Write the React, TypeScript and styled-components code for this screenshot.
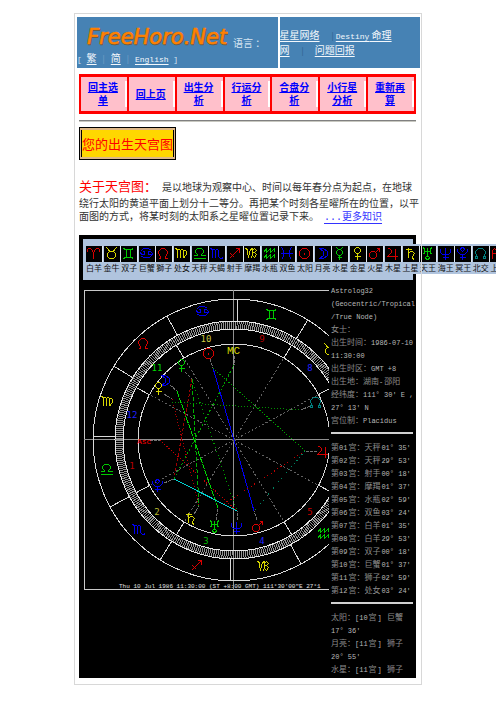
import React from "react";
import styled, { createGlobalStyle } from "styled-components";

const GlobalStyle = createGlobalStyle`
  * { box-sizing: border-box; }
  body {
    margin: 0;
    background: #fff;
    overflow-x: hidden;
    font-family: "Liberation Mono", "Noto Sans CJK SC", monospace;
  }
`;

const RED = "#d80000";
const YELLOW = "#d8d800";
const GREEN = "#00c800";
const BLUE = "#0000f0";
const TEAL = "#008080";

const Frame = styled.main`
  position: relative;
  margin: 13px 74px 0;
  padding: 3px 0 6px;
  border: 1px solid #d8d8d8;

  &::after {
    content: "";
    position: absolute;
    inset: 0 -1px 0 auto;
    border-right: 1px solid #d8d8d8;
    pointer-events: none;
  }
`;

const Header = styled.header`
  display: grid;
  grid-template-columns: 10fr 7fr;
  gap: 2px;
  margin: 0 1px 0 2px;
`;

const HeaderCell = styled.div`
  display: flex;
  flex-direction: column;
  justify-content: center;
  height: 51px;
  background: #4682b4;
  color: #d4e4f2;
  font-family: "Noto Sans CJK SC", sans-serif;
  font-size: 10px;
  line-height: 13px;
  white-space: pre;
`;

const LogoRow = styled.div`
  display: flex;
  align-items: flex-end;
  padding-left: 8px;
  height: 34px;
`;

const LogoSvg = styled.svg`
  flex: none;
  margin-right: 5px;
`;

const LanguageLabel = styled.span`
  padding-bottom: 2px;
`;

const HeaderLatin = styled.span`
  font-family: "Liberation Mono", monospace;
  font-size: 8px;
`;

const HeaderLink = styled.a`
  color: #f4f8fc;
  text-decoration: underline;
  text-underline-offset: 2px;
`;

const Divider = styled.span`
  padding: 0 6px;
  color: #7ea6ca;
  font-size: 8px;
`;

const DarkDivider = styled(Divider)`
  padding: 0 2px 0 12px;
  color: #2c5c88;
`;

const LanguageRow = styled.div`
  height: 17px;
`;

const Content = styled.div`
  margin: 6px 5px 0 4px;
`;

const Menu = styled.nav`
  display: grid;
  grid-template-columns: repeat(7, 1fr);
  gap: 2px;
  padding: 3px 2px;
  background: #f00;
`;

const MenuCell = styled.div`
  display: flex;
  align-items: center;
  height: 34px;
  background: #ffc0cb;
`;

const MenuSlot = styled.div`
  display: flex;
  flex: 1;
  align-items: center;
  justify-content: center;
  height: 26px;
  padding-top: 2px;
  border-right: 2px solid #fff;
  text-align: center;
`;

const MenuLink = styled.a`
  width: 32px;
  color: #00f;
  font-size: 10px;
  font-weight: 700;
  line-height: 13px;
`;

const Rule = styled.hr`
  height: 2px;
  margin: 6px 0 5px;
  border: 0;
  border-top: 1px solid #808080;
  border-bottom: 1px solid #c8c8c0;
`;

const TitleBox = styled.div`
  width: max-content;
  padding: 2px 1px;
  border: 1px solid #000;
  background: #deb887;
`;

const Title = styled.h1`
  margin: 0;
  border: solid #000;
  border-width: 0 1px;
  background: #ffd700;
  color: #f00;
  font-family: "Noto Sans CJK SC", sans-serif;
  font-size: 13px;
  font-weight: 400;
  line-height: 27px;
`;

const Intro = styled.p`
  margin: 14px 0 11px;
  color: #333;
  font-size: 10px;
  line-height: 13px;
  white-space: nowrap;
`;

const IntroFirst = styled.span`
  display: block;
  height: 24px;
  line-height: 24px;
`;

const IntroLine = styled.span`
  display: block;
  height: 13px;
`;

const IntroLead = styled.span`
  margin-right: 5px;
  color: #f00;
  font-family: "Noto Sans CJK SC", sans-serif;
  font-size: 13px;
`;

const MoreLink = styled.a`
  margin-left: 5px;
  color: #33f;
  text-underline-offset: 3px;
`;

const ChartBlock = styled.section`
  padding: 4px 3px 3px 4px;
  background: #000;
`;

const LegendBox = styled.div`
  height: 41px;
  padding: 5px 0 0 3px;
  background: #b0c4de;
`;

const LegendStrip = styled.div`
  display: grid;
  grid-template-columns: repeat(24, 1fr);
  width: 422px;
  height: 30px;
  padding-top: 2px;
  background: #b0c4de;
`;

const LegendItem = styled.div`
  display: flex;
  flex-direction: column;
  align-items: flex-start;
  color: #111;
  font-family: "Noto Sans CJK SC", sans-serif;
  font-size: 8px;
  line-height: 12px;
  white-space: nowrap;
`;

const LegendIcon = styled.svg`
  display: block;
  background: #000;
  box-shadow: 1px 0 #dde6f0;
`;

const ChartRow = styled.div`
  display: flex;
  gap: 2px;
  padding: 3px 0 0 1px;
`;

const ChartSvg = styled.svg`
  flex: none;
  margin-top: 7px;
  font-family: "Liberation Mono", monospace;
`;

const Info = styled.div`
  flex: 1;
  min-width: 0;
  color: #8c8c8c;
  font-family: "Noto Sans CJK SC", sans-serif;
  font-size: 8px;
  line-height: 13px;
  white-space: nowrap;
`;

const InfoLine = styled.div`
  height: 13px;
`;

const InfoLatin = styled.span`
  margin: 0 1px;
  color: #b8b8b8;
  font-family: "Liberation Mono", monospace;
  font-size: 7px;
  white-space: pre;

  &:first-child {
    margin-left: 0;
  }
`;

const InfoRule = styled.hr`
  height: 2px;
  margin: 6px 0;
  border: 0;
  background: #d0d0d0;
`;

const glyphs: Record<string, string> = {
  aries: "M3 7L2 6V4L3 3H5L7 5L8 8V13M8 8L9 5L11 3H13L14 4V6L13 7",
  taurus: "M3 2L5 4L6 6H10L11 4L13 2M6 6L4 8V11L6 13H10L12 11V8L10 6",
  gemini: "M3 3L5 4H11L13 3M3 13L5 12H11L13 13M6 4V12M10 4V12",
  cancer: "M2 6L5 3H10L13 5M14 9L11 12H6L3 11M4 6H6V9H4L2 8V6M10 6H12L14 8V9H10Z",
  leo: "M3 13H5V11L3 8V6L6 3H9L12 6V8L10 11V13H12",
  virgo: "M2 3L4 4V12M4 4H6L7 5V12M7 4H9L10 5V11L12 13M10 5H12L13 6V9L9 13",
  libra: "M2 13H14M2 10H6V9L4 7V5L6 3H10L12 5V7L10 9V10H14",
  scorpio: "M2 3L4 4V12M4 4H6L7 5V12M7 4H9L10 5V11L12 13H14V11",
  sagittarius: "M3 13L13 3M9 3H13V7M4 8L8 12",
  capricorn: "M2 3L4 4V8L5 11L7 4L9 3V10L7 13M9 5L11 3L13 5L11 7H9M11 7L13 9L11 12L9 10",
  aquarius: "M2 7L5 3V7L9 3V7L13 3V6M2 13L5 9V13L9 9V13L13 9V12",
  pisces: "M3 2L5 5V11L3 14M13 2L11 5V11L13 14M2 8H14",
  sun: "M6 3H10L13 6V10L10 13H6L3 10V6ZM8 7V9",
  moon: "M5 3H9L13 6V10L9 13H5L9 10V6Z",
  mercury: "M5 2L7 4H9L11 2M7 4L5 6V8L7 10H9L11 8V6L9 4M8 10V14M6 12H10",
  venus: "M7 2L5 4V6L7 8H9L11 6V4L9 2ZM8 8V14M5 11H11",
  mars: "M5 6L3 8V11L5 13H8L10 11V8L8 6ZM9 7L13 3M10 3H13V6",
  jupiter: "M3 3H5L7 5V7L3 11H13M11 3V14",
  saturn: "M3 4H9M6 2V12M6 8L8 6H10L12 8L10 11V13L12 14",
  uranus: "M4 2L5 4V7L4 9M12 2L11 4V7L12 9M5 6H11M8 2V11M7 11L6 12L7 14H9L10 12L9 11Z",
  neptune: "M3 3V7L5 9H11L13 7V3M8 2V14M5 12H11",
  pluto: "M7 2L6 4L8 6L10 4L9 2ZM3 3V6L6 9H10L13 6V3M8 9V14M5 12H11",
  node: "M3 13H5V11L3 8V6L6 3H10L13 6V8L11 11V13H13M5 11H3V13M11 11H13V13",
  asc: "M3 13V5L5 3L7 5V13M3 8H7M13 6H10V9H13V13H9",
};

const legend: [string, string, string][] = [
  ["aries", "白羊", RED],
  ["taurus", "金牛", YELLOW],
  ["gemini", "双子", GREEN],
  ["cancer", "巨蟹", BLUE],
  ["leo", "獅子", RED],
  ["virgo", "处女", YELLOW],
  ["libra", "天秤", GREEN],
  ["scorpio", "天蝎", BLUE],
  ["sagittarius", "射手", RED],
  ["capricorn", "摩羯", YELLOW],
  ["aquarius", "水瓶", GREEN],
  ["pisces", "双鱼", BLUE],
  ["sun", "太阳", RED],
  ["moon", "月亮", BLUE],
  ["mercury", "水星", GREEN],
  ["venus", "金星", YELLOW],
  ["mars", "火星", RED],
  ["jupiter", "木星", RED],
  ["saturn", "土星", YELLOW],
  ["uranus", "天王", GREEN],
  ["neptune", "海王", BLUE],
  ["pluto", "冥王", BLUE],
  ["node", "北交", TEAL],
  ["asc", "上升", RED],
];

const CX = 150;
const CY = 150;

const placed: [string, number, number, string][] = [
  ["leo", 60, 54, RED],
  ["cancer", 119, 22, BLUE],
  ["gemini", 188, 25, GREEN],
  ["taurus", 246, 60, YELLOW],
  ["virgo", 24, 112, YELLOW],
  ["libra", 23, 180, GREEN],
  ["scorpio", 55, 240, BLUE],
  ["sagittarius", 113, 276, RED],
  ["capricorn", 180, 277, YELLOW],
  ["aquarius", 240, 244, GREEN],
  ["sun", 125, 64, RED],
  ["venus", 98, 76, GREEN],
  ["moon", 81, 91, BLUE],
  ["venus", 75, 99, YELLOW],
  ["pluto", 74, 196, BLUE],
  ["saturn", 107, 229, YELLOW],
  ["uranus", 131, 237, GREEN],
  ["neptune", 153, 238, BLUE],
  ["mars", 174, 237, RED],
  ["jupiter", 239, 162, RED],
  ["node", 232, 113, TEAL],
];

const houseNumbers: [string, number, number, string][] = [
  ["12", 48, 125, "#2020ff"],
  ["11", 73, 78, "#00d800"],
  ["10", 122, 49, "#c8c840"],
  ["9", 178, 49, "#b80000"],
  ["8", 226, 78, "#2020ff"],
  ["1", 48, 176, "#b80000"],
  ["2", 73, 222, "#b8b830"],
  ["3", 122, 251, "#00b800"],
  ["4", 178, 251, "#2020ff"],
  ["5", 226, 222, "#c80000"],
];

const aspects: [number, number, number, number, string, string][] = [
  [129, 78, 150, 150, BLUE, "none"],
  [150, 150, 170, 221, BLUE, "none"],
  [93, 101, 134, 218, "#00d800", "6 1"],
  [108, 89, 115, 216, "#00b000", "4 2"],
  [108, 89, 90, 189, "#a00000", "3 2"],
  [88, 109, 115, 216, "#b00000", "1 2"],
  [76, 150, 153, 221, "#c00000", "1 2"],
  [90, 189, 153, 221, "#00d0d0", "none"],
  [90, 189, 150, 75, "#00a000", "2 2"],
  [221, 161, 134, 218, "#c00000", "1 3"],
  [221, 161, 170, 221, "#008060", "1 3"],
  [129, 78, 221, 161, "#00a000", "1 2"],
  [88, 112, 217, 120, "#009000", "1 2"],
  [108, 89, 153, 221, "#00a000", "1 3"],
];

const pointers: [number, number, number, number][] = [
  [126, 69, 129, 78],
  [101, 82, 108, 89],
  [86, 95, 93, 101],
  [80, 104, 88, 109],
  [150, 66, 150, 75],
  [66, 150, 76, 150],
  [80, 193, 90, 189],
  [110, 224, 115, 216],
  [132, 230, 134, 218],
  [153, 230, 153, 221],
  [173, 230, 170, 221],
  [233, 162, 221, 161],
  [226, 116, 217, 120],
];

const cusps = [28.3, 58.7, 121.4, 151.8, 208.3, 238.7, 301.4, 331.8];
const signs = Array.from({ length: 12 }, (_, i) => i * 30 - 1.6);

function radial(deg: number, inner: number, outer: number) {
  const a = (deg * Math.PI) / 180;
  return {
    x1: CX + Math.cos(a) * inner,
    y1: CY - Math.sin(a) * inner,
    x2: CX + Math.cos(a) * outer,
    y2: CY - Math.sin(a) * outer,
  };
}

function NatalChart() {
  return (
    <ChartSvg width="245" height="300" viewBox="0 0 245 300" role="img" aria-label="天宫图" fill="none">
      <g shapeRendering="crispEdges">
        <path d="M245 .5H.5V299.5H245" stroke="#c8c8c8" />
        <path d="M149.5 0V300M0 149.5H245" stroke="#909090" />
        <circle cx={CX} cy={CY} r="115" stroke="#909090" strokeWidth="8" strokeDasharray="1 1" />
        <circle cx={CX} cy={CY} r="141" stroke="#d8d8d8" />
        <circle cx={CX} cy={CY} r="119" stroke="#e8e8e8" />
        <circle cx={CX} cy={CY} r="111" stroke="#e8e8e8" />
        <circle cx={CX} cy={CY} r="96" stroke="#d8d8d8" />
        {signs.map((d) => (
          <line key={d} {...radial(d, 119, 141)} stroke="#d8d8d8" />
        ))}
        {cusps.map((d) => (
          <g key={d}>
            <line {...radial(d, 96, 111)} stroke="#d8d8d8" />
            <line {...radial(d, 0, 96)} stroke="#606060" strokeDasharray="2 2" />
          </g>
        ))}
        {pointers.map(([x1, y1, x2, y2]) => (
          <line key={`${x1}-${y1}`} x1={x1} y1={y1} x2={x2} y2={y2} stroke="#707070" strokeDasharray="3 1" />
        ))}
        {aspects.map(([x1, y1, x2, y2, stroke, dash], i) => (
          <line key={i} x1={x1} y1={y1} x2={x2} y2={y2} stroke={stroke} strokeDasharray={dash} />
        ))}
        {placed.map(([name, x, y, color]) => (
          <path key={`${name}-${x}`} d={glyphs[name]} transform={`translate(${x - 8.5} ${y - 8.5})`} stroke={color} />
        ))}
      </g>
      <g fontSize="9" textAnchor="middle" fontFamily="DejaVu Sans Mono, monospace">
        {houseNumbers.map(([n, x, y, color]) => (
          <text key={n} x={x} y={y + 3} fill={color}>{n}</text>
        ))}
      </g>
      <text x="143" y="64" fontSize="11" fill="#d8d800">MC</text>
      <text x="53" y="154" fontSize="8" fill="#ff0000">Asc</text>
      <text x="35" y="298" fontSize="6" fill="#e0e0e0">
        {"Thu 10 Jul 1986 11:30:00 (ST +8:00 GMT) 111°30'00\"E 27°1"}
      </text>
    </ChartSvg>
  );
}

const birthInfo = [
  "Astrolog32",
  "(Geocentric/Tropical",
  "/True Node)",
  "女士：",
  "出生时间：1986-07-10",
  "11:30:00",
  "出生时区：GMT +8",
  "出生地：湖南-邵阳",
  "经纬度：111° 30' E ,",
  "27° 13' N",
  "宫位制：Placidus",
];

const houseInfo = [
  "第01宫：天秤01° 35'",
  "第02宫：天秤29° 53'",
  "第03宫：射手00° 18'",
  "第04宫：摩羯01° 37'",
  "第05宫：水瓶02° 59'",
  "第06宫：双鱼03° 24'",
  "第07宫：白羊01° 35'",
  "第08宫：白羊29° 53'",
  "第09宫：双子00° 18'",
  "第10宫：巨蟹01° 37'",
  "第11宫：狮子02° 59'",
  "第12宫：处女03° 24'",
];

const planetInfo = [
  "太阳：[10宫] 巨蟹",
  "17° 36'",
  "月亮：[11宫] 狮子",
  "20° 55'",
  "水星：[11宫] 狮子",
];

function InfoLines({ lines }: { lines: string[] }) {
  return (
    <>
      {lines.map((line) => (
        <InfoLine key={line}>
          {line.split(/([\x20-\x7e°]+)/).map((part, i) =>
            i % 2 ? <InfoLatin key={i}>{part}</InfoLatin> : part
          )}
        </InfoLine>
      ))}
    </>
  );
}

const menu = ["回主选单", "回上页", "出生分析", "行运分析", "合盘分析", "小行星分析", "重新再算"];

export default function App() {
  return (
    <>
      <GlobalStyle />
      <Frame>
        <Header>
          <HeaderCell>
            <LogoRow>
              <LogoSvg width="143" height="30" viewBox="0 0 143 30" role="img" aria-label="FreeHoro.Net">
                <g fontFamily="DejaVu Sans, sans-serif" fontSize="21" fontStyle="italic" strokeWidth="0.6">
                  <text x="3" y="24" fill="#6b5a3c" stroke="#6b5a3c">FreeHoro.Net</text>
                  <text x="2" y="23" fill="#ff8000" stroke="#ff8000">FreeHoro.Net</text>
                </g>
              </LogoSvg>
              <LanguageLabel>语言 ：</LanguageLabel>
            </LogoRow>
            <LanguageRow>
              <HeaderLatin>[ </HeaderLatin>
              <HeaderLink href="#traditional">繁</HeaderLink>
              <Divider>|</Divider>
              <HeaderLink href="#simplified">简</HeaderLink>
              <Divider>|</Divider>
              <HeaderLink href="#english"><HeaderLatin>English</HeaderLatin></HeaderLink>
              <HeaderLatin> ]</HeaderLatin>
            </LanguageRow>
          </HeaderCell>
          <HeaderCell>
            <div>
              <HeaderLink href="#network">星星网络</HeaderLink>
              <DarkDivider>|</DarkDivider>
              <HeaderLink href="#destiny"><HeaderLatin>Destiny</HeaderLatin> 命理</HeaderLink>
            </div>
            <div>
              <HeaderLink href="#destiny">网</HeaderLink>
              <DarkDivider>|</DarkDivider>
              {"    "}
              <HeaderLink href="#report">问题回报</HeaderLink>
            </div>
          </HeaderCell>
        </Header>
        <Content>
          <Menu>
            {menu.map((label) => (
              <MenuCell key={label}>
                <MenuSlot>
                  <MenuLink href="#menu">{label}</MenuLink>
                </MenuSlot>
              </MenuCell>
            ))}
          </Menu>
          <Rule />
          <TitleBox>
            <Title>您的出生天宫图</Title>
          </TitleBox>
          <Intro>
            <IntroFirst>
              <IntroLead>关于天宫图：</IntroLead>
              是以地球为观察中心、时间以每年春分点为起点，在地球
            </IntroFirst>
            <IntroLine>绕行太阳的黄道平面上划分十二等分。再把某个时刻各星曜所在的位置，以平</IntroLine>
            <IntroLine>
              面图的方式，将某时刻的太阳系之星曜位置记录下来。
              <MoreLink href="#more">...更多知识</MoreLink>
            </IntroLine>
          </Intro>
          <ChartBlock>
            <LegendBox>
              <LegendStrip>
                {legend.map(([name, label, color]) => (
                  <LegendItem key={name}>
                    <LegendIcon width="16" height="16" viewBox="0 0 16 16" fill="none" shapeRendering="crispEdges" aria-hidden="true">
                      <path d={glyphs[name]} transform="translate(-.5 -.5)" stroke={color} />
                    </LegendIcon>
                    {label}
                  </LegendItem>
                ))}
              </LegendStrip>
            </LegendBox>
            <ChartRow>
              <NatalChart />
              <Info>
                <InfoLines lines={birthInfo} />
                <InfoRule />
                <InfoLines lines={houseInfo} />
                <InfoRule />
                <InfoLines lines={planetInfo} />
              </Info>
            </ChartRow>
          </ChartBlock>
        </Content>
      </Frame>
    </>
  );
}
